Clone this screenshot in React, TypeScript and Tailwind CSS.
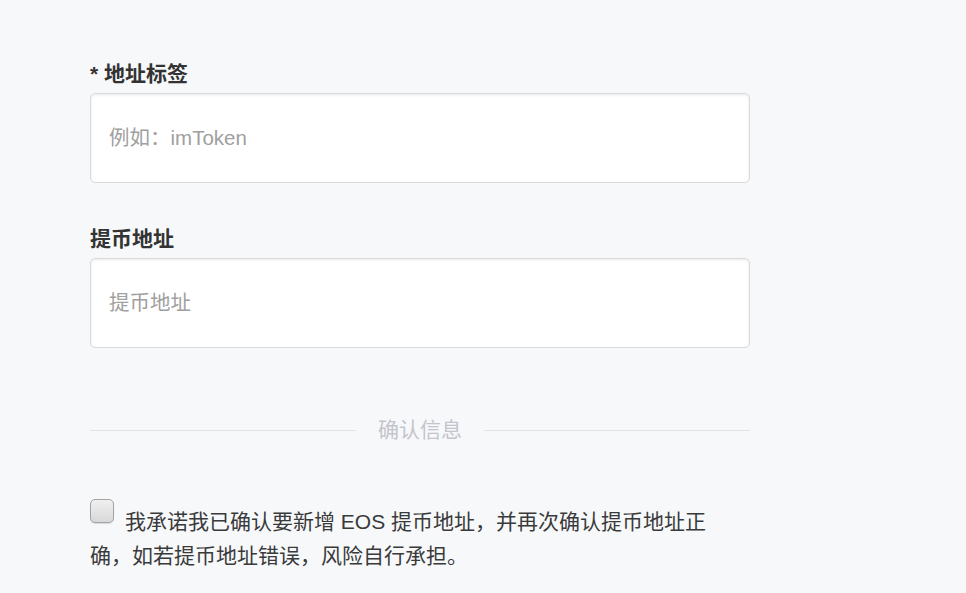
export default function App() {
  return (
    <div className="min-h-[593px] bg-[#f7f8fa] font-['Liberation_Sans','Noto_Sans_CJK_SC',sans-serif] text-[#333]">
      <div className="w-[660px] ml-[90px] pt-[60px]">
        <label className="block text-[21px] leading-[28px] font-bold text-[#333]">* 地址标签</label>
        <input
          className="mt-[5px] block w-full h-[90px] rounded-[5px] border border-[#dadada] bg-white px-[18px] text-[20.5px] outline-none shadow-[inset_0_1px_3px_rgba(0,0,0,0.09)] placeholder:text-[#a0a0a0] font-['Liberation_Sans','Noto_Sans_CJK_SC',sans-serif]"
          placeholder="例如：imToken"
        />

        <label className="block mt-[42px] text-[21px] leading-[28px] font-bold text-[#333]">提币地址</label>
        <input
          className="mt-[5px] block w-full h-[90px] rounded-[5px] border border-[#dadada] bg-white px-[18px] text-[20.5px] outline-none shadow-[inset_0_1px_3px_rgba(0,0,0,0.09)] placeholder:text-[#a0a0a0] font-['Liberation_Sans','Noto_Sans_CJK_SC',sans-serif]"
          placeholder="提币地址"
        />

        <div className="mt-[68px] flex items-center gap-[22px]">
          <div className="flex-1 h-px bg-[#e1e2e8]" />
          <span className="text-[21px] leading-[28px] text-[#c4c4cc]">确认信息</span>
          <div className="flex-1 h-px bg-[#e1e2e8]" />
        </div>

        <p className="mt-[55px] w-[636px] text-[21px] leading-[34px] text-[#3a3a3a]">
          <span className="inline-block w-[24px] h-[24px] mr-[11px] align-[6px] rounded-[5px] border border-[#a3a3a3] bg-gradient-to-b from-[#f0f0f0] to-[#d8d8d8] shadow-[0_1px_1px_rgba(0,0,0,0.12)]" />
          我承诺我已确认要新增 EOS 提币地址，并再次确认提币地址正确，如若提币地址错误，风险自行承担。
        </p>
      </div>
    </div>
  );
}
